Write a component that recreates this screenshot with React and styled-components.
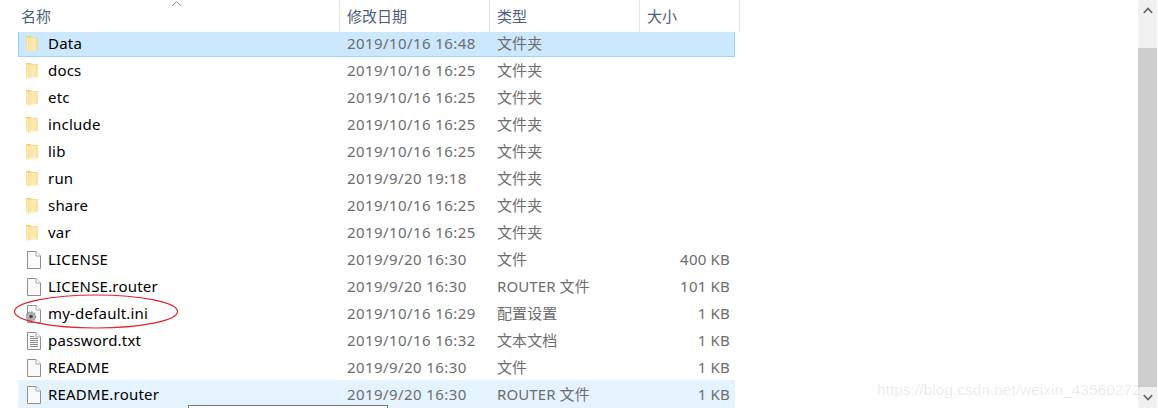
import React from "react";
import styled, { createGlobalStyle } from "styled-components";

const Global = createGlobalStyle`
  html, body { margin: 0; padding: 0; background: #fff; }
  body { font-family: "Noto Sans", "Noto Sans CJK SC", sans-serif; overflow: hidden; }
`;

const Window = styled.div`
  position: relative;
  display: flex;
  width: 1158px;
  height: 408px;
  overflow: hidden;
  background: #fff;
`;

const Listing = styled.div`
  flex: 1;
  min-width: 0;
  display: flex;
  flex-direction: column;
`;

const Header = styled.div`
  display: grid;
  grid-template-columns: 340px 150px 150px 100px;
  width: 740px;
  height: 32px;
  flex: none;
`;

const HeaderCell = styled.div`
  position: relative;
  box-sizing: border-box;
  padding: 0 0 0 ${(p) => (p.$first ? 21 : 7)}px;
  border-right: 1px solid #e5e5e5;
  font-size: 15px;
  line-height: 32px;
  color: #4c607a;
`;

const SortCaret = styled.svg`
  position: absolute;
  left: 171px;
  top: 0;
  width: 11px;
  height: 7px;
`;

const Rows = styled.div`
  display: flex;
  flex-direction: column;
  gap: 2px;
  margin-left: 18px;
  width: 717px;
`;

const Row = styled.div`
  display: grid;
  grid-template-columns: 329px 150px 150px 88px;
  align-items: center;
  box-sizing: border-box;
  height: ${(p) => (p.$hovered ? 28 : 25)}px;
  flex: none;
  font-size: 15px;
  line-height: 20px;
  ${(p) =>
    p.$selected &&
    `background: #cce8ff; box-shadow: inset 1px 0 #99d1ff, inset -1px 0 #99d1ff, inset 0 -1px #99d1ff;`}
  ${(p) => p.$hovered && `background: #e5f3ff; margin-top: -3px; padding-top: 3px;`}
`;

const NameCell = styled.div`
  display: flex;
  align-items: center;
  color: #000;
  padding-left: 8px;
  white-space: nowrap;
  letter-spacing: 0.2px;
`;

const NameText = styled.span`
  position: relative;
  top: -2px;
`;

const IconSlot = styled.span`
  display: inline-flex;
  flex: none;
  width: 22px;
  height: 18px;
  position: relative;
  top: -1px;
`;

const Meta = styled.div`
  position: relative;
  top: -2px;
  color: #6d6d6d;
  white-space: nowrap;
  letter-spacing: 0.42px;
`;

const TypeCell = styled(Meta)`
  letter-spacing: 0.1px;
`;

const Size = styled(Meta)`
  text-align: right;
  padding-right: 5px;
  letter-spacing: 0.2px;
`;

const Scrollbar = styled.div`
  flex: none;
  width: 19px;
  margin-right: 1px;
  display: flex;
  flex-direction: column;
  background: #f0f0f0;
`;

const ScrollButton = styled.div`
  display: flex;
  align-items: ${(p) => (p.$top ? "flex-start" : "center")};
  justify-content: center;
  box-sizing: border-box;
  padding-top: ${(p) => (p.$top ? 7 : 0)}px;
  flex: none;
  height: ${(p) => p.$h}px;
`;

const Thumb = styled.div`
  flex: 1;
  background: #cdcdcd;
`;

const Ellipse = styled.svg`
  position: absolute;
  left: 12px;
  top: 294px;
  width: 168px;
  height: 36px;
  pointer-events: none;
`;

const Tooltip = styled.div`
  position: absolute;
  left: 188px;
  top: 405px;
  width: 198px;
  height: 20px;
  background: #fff;
  border: 1px solid #767676;
`;

const Watermark = styled.div`
  position: absolute;
  left: 877px;
  top: 380px;
  font-family: "Liberation Sans", Arial, sans-serif;
  font-size: 15.5px;
  line-height: 20px;
  color: rgba(120, 120, 120, 0.16);
  white-space: nowrap;
`;

const Folder = () => (
  <svg width="14" height="18" viewBox="0 0 14 18">
    <defs>
      <linearGradient id="fg" x1="0" x2="1" y1="0" y2="0">
        <stop offset="0" stopColor="#f9e09a" />
        <stop offset="0.6" stopColor="#fdedb8" />
        <stop offset="1" stopColor="#f9df97" />
      </linearGradient>
    </defs>
    <path d="M0 1 L5 1 L5 2 L11.5 2 L11.5 15 L0 15 Z" fill="#efcb6c" />
    <path d="M2 2.5 L11.5 2.5 L11.5 15.5 L4 15.5 L2 17.5 Z" fill="url(#fg)" />
    <path d="M0.5 1.5 L2 2.5 L2 17 L0.5 15 Z" fill="#fdeebb" />
  </svg>
);

const FileIcon = ({ kind }) => (
  <svg width="16" height="18" viewBox="0 0 16 18">
    <path d="M1.5 0.5 H10 L14.5 5 V17.5 H1.5 Z" fill="#fafafa" stroke="#8f8f8f" />
    <path d="M10 0.5 V5 H14.5" fill="#fff" stroke="#a8a8a8" />
    {kind === "txt" &&
      [6, 8, 10, 12, 14].map((y) => (
        <path key={y} d={`M4 ${y}.5 H12`} stroke="#8c8c8c" />
      ))}
    {kind === "txt" && <path d="M4 4.5 H8" stroke="#8c8c8c" />}
    {kind === "ini" && (
      <g>
        <circle cx="5" cy="11.5" r="4.6" fill="#b4b4b4" stroke="#8f8f8f" strokeWidth="1.2" strokeDasharray="1.8 1.2" />
        <circle cx="5" cy="11.5" r="1.8" fill="#4a4a4a" />
      </g>
    )}
  </svg>
);

const entries = [
  { name: "Data", date: "2019/10/16 16:48", type: "文件夹", folder: true, selected: true },
  { name: "docs", date: "2019/10/16 16:25", type: "文件夹", folder: true },
  { name: "etc", date: "2019/10/16 16:25", type: "文件夹", folder: true },
  { name: "include", date: "2019/10/16 16:25", type: "文件夹", folder: true },
  { name: "lib", date: "2019/10/16 16:25", type: "文件夹", folder: true },
  { name: "run", date: "2019/9/20 19:18", type: "文件夹", folder: true },
  { name: "share", date: "2019/10/16 16:25", type: "文件夹", folder: true },
  { name: "var", date: "2019/10/16 16:25", type: "文件夹", folder: true },
  { name: "LICENSE", date: "2019/9/20 16:30", type: "文件", size: "400 KB" },
  { name: "LICENSE.router", date: "2019/9/20 16:30", type: "ROUTER 文件", size: "101 KB" },
  { name: "my-default.ini", date: "2019/10/16 16:29", type: "配置设置", size: "1 KB", kind: "ini" },
  { name: "password.txt", date: "2019/10/16 16:32", type: "文本文档", size: "1 KB", kind: "txt" },
  { name: "README", date: "2019/9/20 16:30", type: "文件", size: "1 KB" },
  { name: "README.router", date: "2019/9/20 16:30", type: "ROUTER 文件", size: "1 KB", hovered: true },
];

export default function App() {
  return (
    <Window>
      <Global />
      <Listing>
        <Header>
          <HeaderCell $first>
            名称
            <SortCaret viewBox="0 0 11 7">
              <path d="M1 6 L5.5 1.5 L10 6" fill="none" stroke="#8a8f98" />
            </SortCaret>
          </HeaderCell>
          <HeaderCell>修改日期</HeaderCell>
          <HeaderCell>类型</HeaderCell>
          <HeaderCell>大小</HeaderCell>
        </Header>
        <Rows>
          {entries.map((e) => (
            <Row key={e.name} $selected={e.selected} $hovered={e.hovered}>
              <NameCell>
                <IconSlot>{e.folder ? <Folder /> : <FileIcon kind={e.kind} />}</IconSlot>
                <NameText>{e.name}</NameText>
              </NameCell>
              <Meta>{e.date}</Meta>
              <TypeCell>{e.type}</TypeCell>
              <Size>{e.size}</Size>
            </Row>
          ))}
        </Rows>
      </Listing>
      <Scrollbar>
        <ScrollButton $h={48} $top>
          <svg width="10" height="7" viewBox="0 0 10 7">
            <path d="M0.8 6 L5 1.5 L9.2 6" fill="none" stroke="#606060" strokeWidth="1.6" />
          </svg>
        </ScrollButton>
        <Thumb />
        <ScrollButton $h={21}>
          <svg width="10" height="7" viewBox="0 0 10 7">
            <path d="M0.8 1 L5 5.5 L9.2 1" fill="none" stroke="#606060" strokeWidth="1.6" />
          </svg>
        </ScrollButton>
      </Scrollbar>
      <Ellipse viewBox="0 0 168 36">
        <ellipse cx="84" cy="17.5" rx="81.5" ry="16.5" fill="none" stroke="#e8222e" strokeWidth="1.2" />
      </Ellipse>
      <Tooltip />
      <Watermark>https://blog.csdn.net/weixin_43560272</Watermark>
    </Window>
  );
}
